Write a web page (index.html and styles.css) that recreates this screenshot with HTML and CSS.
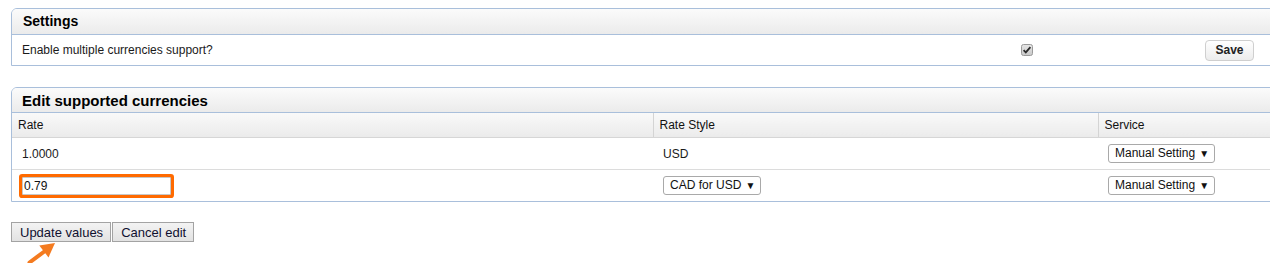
FILE: index.html
```html
<!DOCTYPE html>
<html>
<head>
    <meta charset="UTF-8">
    <title>Currencies</title>
    <link rel="stylesheet" href="styles.css">
</head>
<body>

<div class="panel settings">
    <div class="panel-head">Settings</div>
    <div class="settings-row">
        <span class="cell">Enable multiple currencies support?</span>
        <span class="cell">
            <svg class="check" width="12" height="12" viewBox="0 0 12 12">
                <defs>
                    <linearGradient id="cb" x1="0" y1="0" x2="0" y2="1">
                        <stop offset="0" stop-color="#e6e6e6"/>
                        <stop offset="1" stop-color="#c9c9c9"/>
                    </linearGradient>
                </defs>
                <rect x="0.5" y="0.5" width="11" height="11" rx="2" fill="url(#cb)" stroke="#9a9a9a"/>
                <path d="M2.6 6.2 L4.8 8.4 L9.4 3.2" fill="none" stroke="#2b2b2b" stroke-width="1.8"/>
            </svg>
        </span>
        <span class="cell"><button class="save-btn">Save</button></span>
    </div>
</div>

<div class="panel currencies">
    <div class="panel-head big">Edit supported currencies</div>
    <table class="grid">
        <colgroup>
            <col class="c-rate">
            <col class="c-style">
            <col>
        </colgroup>
        <tr>
            <th>Rate</th>
            <th>Rate Style</th>
            <th>Service</th>
        </tr>
        <tr>
            <td>1.0000</td>
            <td>USD</td>
            <td><span class="dropdown">Manual Setting</span></td>
        </tr>
        <tr>
            <td><input class="rate-input" type="text" value="0.79"></td>
            <td><span class="dropdown">CAD for USD</span></td>
            <td><span class="dropdown">Manual Setting</span></td>
        </tr>
    </table>
</div>

<div class="actions">
    <button class="btn">Update values</button><button class="btn">Cancel edit</button>
    <!-- pointer drawn over the buttons -->
    <svg class="pointer" width="36" height="30" viewBox="0 0 36 30">
        <line x1="3.5" y1="26.5" x2="19" y2="15" stroke="#f47b20" stroke-width="4" stroke-linecap="round"/>
        <polygon points="29,7 13.3,9.6 22.5,21.4" fill="#f47b20"/>
    </svg>
</div>

</body>
</html>
```

FILE: styles.css
```css
html {
    overflow: hidden;
}

body {
    font-family: "Liberation Sans", Arial, sans-serif;
    font-size: 12px;
    color: #1a1a1a;
    margin: 0;
    padding: 8px 0 0 0;
    background-color: #fff;
    min-height: 263px;
    box-sizing: border-box;
}

.panel {
    margin: 0 -20px 0 11px;
    border: 1px solid #a9bfdb;
    border-top-left-radius: 6px;
    overflow: hidden;
}

.currencies {
    margin-top: 21px;
}

.panel-head {
    height: 25px;
    line-height: 25px;
    padding-left: 11px;
    font-size: 14px;
    font-weight: bold;
    color: #000;
    background: linear-gradient(#fbfbfb, #ebebeb);
    border-bottom: 1px solid #a9bfdb;
}

.panel-head.big {
    height: 24px;
    line-height: 25px;
    font-size: 15px;
    padding-left: 10px;
}

.settings-row {
    display: grid;
    grid-template-columns: 999px 184px 1fr;
    align-items: center;
    height: 30px;
}

.settings-row .cell {
    padding-left: 10px;
    display: flex;
    align-items: center;
}

.check {
    display: block;
}

.save-btn {
    font-family: "Liberation Sans", Arial, sans-serif;
    font-size: 12px;
    font-weight: bold;
    color: #222;
    width: 49px;
    height: 21px;
    padding: 0;
    border: 1px solid #cfcfcf;
    border-radius: 4px;
    background: linear-gradient(#ffffff, #ececec);
}

.grid {
    width: 100%;
    border-collapse: collapse;
    table-layout: fixed;
}

.c-rate {
    width: 641px;
}

.c-style {
    width: 445px;
}

.grid th {
    height: 24px;
    padding: 0 0 0 6px;
    text-align: left;
    font-weight: normal;
    color: #111;
    background: linear-gradient(#f9f9f9, #ebebeb);
    border-left: 1px solid #d4d4d4;
    border-bottom: 1px solid #d6d6d6;
}

.grid th:first-child {
    border-left: none;
}

.grid td {
    height: 31px;
    padding: 0 0 0 10px;
    border-bottom: 1px solid #dcdcdc;
    vertical-align: middle;
}

.grid tr:last-child td {
    border-bottom: none;
}

.rate-input {
    display: block;
    box-sizing: border-box;
    width: 149px;
    height: 18px;
    padding: 0 0 0 1px;
    font-family: "Liberation Sans", Arial, sans-serif;
    font-size: 12px;
    color: #111;
    border: 1px solid #c8c8c8;
    border-radius: 1px;
    box-shadow: 0 0 0 3px #ff6a00;
    outline: none;
}

.dropdown {
    display: inline-block;
    vertical-align: middle;
    position: relative;
    box-sizing: border-box;
    height: 19px;
    line-height: 17px;
    padding: 0 19px 0 6px;
    border: 1px solid #a9a9a9;
    border-radius: 3px;
    background-color: #fff;
    color: #111;
}

.dropdown::after {
    content: "\25BC";
    position: absolute;
    right: 5px;
    top: 0;
    font-size: 10px;
    color: #111;
}

.actions {
    position: relative;
    margin: 20px 0 0 11px;
    display: flex;
}

.btn {
    font-family: "Liberation Sans", Arial, sans-serif;
    font-size: 13px;
    color: #101030;
    height: 20px;
    padding: 0 7px 0 8px;
    margin: 0 1px 0 0;
    border: 1px solid #a3a3a3;
    border-radius: 0;
    background: linear-gradient(#f3f3f3, #e2e2e2);
}

.pointer {
    position: absolute;
    left: 15px;
    top: 14px;
}
```
